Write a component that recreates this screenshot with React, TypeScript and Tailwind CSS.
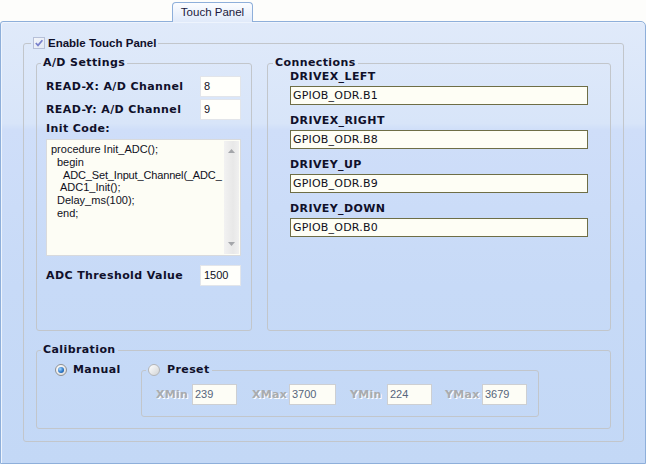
const label = "font-['DejaVu_Sans',sans-serif] font-bold text-[11px] tracking-[0.4px] leading-[14px] text-[#10102a] whitespace-nowrap";
const dimLabel = "font-['DejaVu_Sans',sans-serif] font-bold text-[11px] tracking-[0.3px] leading-[14px] text-[#a9abae] [text-shadow:1px_1px_0_#ffffff] whitespace-nowrap";
const groupBorder = "border border-[#c2c6cb] rounded-[3px] min-w-0";

const NumBox = ({ value }: { value: string }) => (
  <div className="w-[41px] h-[21px] border border-[#e2e5ea] bg-[#fffffb] flex items-center pl-[3px] font-['Liberation_Sans',sans-serif] text-[11px] text-[#10101c]">
    {value}
  </div>
);

const PinBox = ({ value }: { value: string }) => (
  <div className="mt-[2px] w-[298px] h-[19px] border border-[#6e6e46] bg-[#fefef5] flex items-center pl-[2px] font-['DejaVu_Sans',sans-serif] text-[11px] leading-[14px] tracking-[0.2px] text-[#10101c]">
    {value}
  </div>
);

const DimBox = ({ value, w }: { value: string; w: string }) => (
  <div className={`${w} h-[21px] border border-[#cdcfd2] bg-[#fdfdf6] flex items-center pl-[2px] font-['Liberation_Sans',sans-serif] text-[11px] text-[#56657c]`}>
    {value}
  </div>
);

const Pin = ({ name, value, first }: { name: string; value: string; first?: boolean }) => (
  <div className={first ? '' : 'mt-[9px]'}>
    <div className={label}>{name}</div>
    <PinBox value={value} />
  </div>
);

export default function App() {
  return (
    <div className="w-[646px] h-[464px] bg-[#fdfdfb] overflow-hidden font-['DejaVu_Sans',sans-serif]">
      {/* tab strip */}
      <div className="h-[21px] flex items-end pl-[172px]">
        <div className="relative z-10 -mb-px h-[20px] w-[81px] border border-b-0 border-[#8eafda] rounded-t-[4px] bg-[linear-gradient(to_bottom,#fcfdff,#e0eafa)] flex items-center justify-center font-['Liberation_Sans',sans-serif] text-[11.5px] text-[#1a1a3c]">
          Touch Panel
        </div>
      </div>

      {/* page */}
      <div className="h-[443px] border border-[#8eafda] rounded-tr-[5px] rounded-tl-[3px] shadow-[inset_1px_1px_0_#eef4fd] bg-[linear-gradient(to_bottom,#e0eafa_0%,#d8e5f9_23%,#cfdef9_24.5%,#c7daf7_60%,#c3d8f6_100%)] pt-[14px] pl-[22px]">
        <fieldset className={`w-[601px] ${groupBorder}`}>
          <legend className="ml-[7px] px-[2px] text-[11px] leading-[14px]">
            <span className="flex items-center gap-[3px] h-[14px]">
              <span className="w-[12px] h-[12px] border border-[#b7c0d8] bg-[linear-gradient(135deg,#f4f6fb,#e2e8f3)] flex items-center justify-center">
                <svg width="10" height="10" viewBox="0 0 10 10">
                  <path d="M1.8 5 L4 7.4 L8.4 2.2" fill="none" stroke="#7880cc" strokeWidth="1.7" />
                </svg>
              </span>
              <span className="font-['Liberation_Sans',sans-serif] font-bold text-[11.5px] leading-[14px] text-[#10102a]">
                Enable Touch Panel
              </span>
            </span>
          </legend>

          <div className="px-[12px] pt-[6px] pb-[12px]">
            <div className="flex gap-[15px]">
              {/* A/D settings */}
              <fieldset className={`w-[216px] ${groupBorder}`}>
                <legend className={`ml-[4px] px-[2px] ${label}`}>A/D Settings</legend>
                <div className="h-[260px] pl-[9px] pr-[10px] pt-[6px] flex flex-col">
                  <div className="flex items-center justify-between h-[21px]">
                    <span className={label}>READ-X: A/D Channel</span>
                    <NumBox value="8" />
                  </div>
                  <div className="mt-[2px] flex items-center justify-between h-[21px]">
                    <span className={label}>READ-Y: A/D Channel</span>
                    <NumBox value="9" />
                  </div>
                  <div className={`mt-[2px] ${label}`}>Init Code:</div>
                  <div className="mt-[3px] h-[117px] w-[195px] border border-[#d8dadd] bg-[#fdfdf5] flex overflow-hidden">
                    <div className="flex-1 min-w-0 overflow-hidden whitespace-nowrap pl-[4px] pt-[3px] font-['Liberation_Sans',sans-serif] text-[11px] leading-[12.8px] text-[#10101c]">
                      <div>procedure Init_ADC();</div>
                      <div className="pl-[6px]">begin</div>
                      <div className="pl-[12px] tracking-[-0.15px]">ADC_Set_Input_Channel(_ADC_</div>
                      <div className="pl-[9px]">ADC1_Init();</div>
                      <div className="pl-[6px]">Delay_ms(100);</div>
                      <div className="pl-[6px]">end;</div>
                    </div>
                    <div className="w-[15px] my-px mr-px bg-[linear-gradient(to_right,#f2f2f2,#e8e8e8_60%,#f0f0f0)] flex flex-col items-center justify-between py-[8px]">
                      <svg width="7" height="4" viewBox="0 0 7 4">
                        <path d="M0 4 L3.5 0 L7 4 Z" fill="#a4a6aa" />
                      </svg>
                      <svg width="7" height="4" viewBox="0 0 7 4">
                        <path d="M0 0 L7 0 L3.5 4 Z" fill="#a4a6aa" />
                      </svg>
                    </div>
                  </div>
                  <div className="mt-[9px] flex items-center justify-between h-[21px]">
                    <span className={label}>ADC Threshold Value</span>
                    <NumBox value="1500" />
                  </div>
                </div>
              </fieldset>

              {/* connections */}
              <fieldset className={`w-[344px] ${groupBorder}`}>
                <legend className={`ml-[5px] px-[2px] ${label}`}>Connections</legend>
                <div className="h-[260px] pl-[22px] flex flex-col">
                  <Pin name="DRIVEX_LEFT" value="GPIOB_ODR.B1" first />
                  <Pin name="DRIVEX_RIGHT" value="GPIOB_ODR.B8" />
                  <Pin name="DRIVEY_UP" value="GPIOB_ODR.B9" />
                  <Pin name="DRIVEY_DOWN" value="GPIOB_ODR.B0" />
                </div>
              </fieldset>
            </div>

            {/* calibration */}
            <fieldset className={`mt-[12px] w-[575px] ${groupBorder}`}>
              <legend className={`ml-[4px] px-[2px] ${label}`}>Calibration</legend>
              <div className="h-[71px] pl-[18px] pt-[6px] flex items-start">
                <div className="w-[86px] h-[14px] flex items-center gap-[6px]">
                  <span className="w-[12px] h-[12px] rounded-full border border-[#8e9092] bg-[linear-gradient(135deg,#ffffff,#d9d9d9)] flex items-center justify-center">
                    <span className="w-[6px] h-[6px] rounded-full bg-[radial-gradient(circle_at_35%_35%,#a8d8ff,#2d7acb_55%,#123f80)]" />
                  </span>
                  <span className={label}>Manual</span>
                </div>

                <fieldset className={`w-[398px] ${groupBorder}`}>
                  <legend className="ml-[4px] px-[2px] text-[11px] leading-[14px]">
                    <span className="flex items-center gap-[7px] h-[14px]">
                      <span className="w-[12px] h-[12px] rounded-full border border-[#b3b5b8] bg-[linear-gradient(135deg,#ffffff,#d2d4d6)]" />
                      <span className={label}>Preset</span>
                    </span>
                  </legend>
                  <div className="pt-[7px] pb-[11px] pl-[14px] flex items-center">
                    <span className={`w-[36px] ${dimLabel}`}>XMin</span>
                    <DimBox value="239" w="w-[45px]" />
                    <span className={`ml-[15px] w-[37px] ${dimLabel}`}>XMax</span>
                    <DimBox value="3700" w="w-[47px]" />
                    <span className={`ml-[14px] w-[37px] ${dimLabel}`}>YMin</span>
                    <DimBox value="224" w="w-[45px]" />
                    <span className={`ml-[13px] w-[37px] ${dimLabel}`}>YMax</span>
                    <DimBox value="3679" w="w-[45px]" />
                  </div>
                </fieldset>
              </div>
            </fieldset>
          </div>
        </fieldset>
      </div>
    </div>
  );
}
